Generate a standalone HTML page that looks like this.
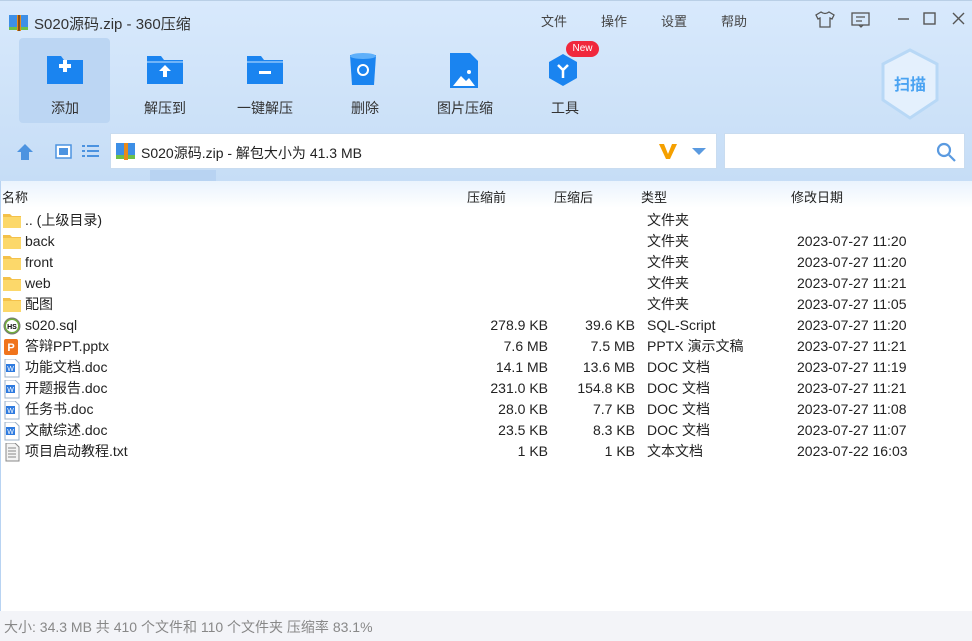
<!DOCTYPE html><html><head><meta charset="utf-8"><style>
*{margin:0;padding:0;box-sizing:border-box}
body{width:972px;height:641px;overflow:hidden;font-family:"Liberation Sans","Noto Sans CJK SC",sans-serif;background:#fff;position:relative;color:#222}
.top{position:absolute;left:0;top:0;width:972px;height:181px;background:linear-gradient(#d8e9fc,#c6ddf6);border-top:1px solid #b9cfe6}
.abs{position:absolute}
.menu{font-size:13px;color:#444;top:11px}
.tb{position:absolute;top:38px;width:90px;height:85px;text-align:center;font-size:14px;color:#333}
.tb .lbl{position:absolute;top:60px;width:100%}
.tb svg{position:absolute;left:25px;top:14px}
.hdr{position:absolute;top:181px;left:0;width:972px;height:27px;background:linear-gradient(#eaf3fd,#fff);font-size:13px}
.hdr span{position:absolute;top:6px}
.row{position:absolute;left:0;width:972px;height:21px;font-size:14px;line-height:21px}
.row .n{position:absolute;left:25px}
.row .a{position:absolute;right:424px}
.row .b{position:absolute;right:337px}
.row .t{position:absolute;left:647px}
.row .d{position:absolute;left:797px}
.row svg{position:absolute;left:3px;top:2px}
.status{position:absolute;top:611px;left:0;width:972px;height:30px;background:#f3f4f8;font-size:14px;color:#888;padding:6px 0 0 4px}
</style></head><body>
<div class="top"></div>
<svg class="abs" style="left:9px;top:13px" width="20" height="18"><rect x="0" y="2" width="19" height="14" fill="#3d8fe6"/><rect x="0" y="14" width="19" height="3" fill="#6cc04a"/><rect x="8" y="2" width="4" height="16" fill="#e88a1a"/><rect x="9" y="2" width="2" height="16" fill="#8a4b12"/></svg>
<div class="abs" style="left:34px;top:13px;font-size:15px;color:#333">S020源码.zip - 360压缩</div>
<div class="abs menu" style="left:541px">文件</div>
<div class="abs menu" style="left:601px">操作</div>
<div class="abs menu" style="left:661px">设置</div>
<div class="abs menu" style="left:721px">帮助</div>
<svg class="abs" style="left:815px;top:11px" width="20" height="17" fill="none" stroke="#555" stroke-width="1.3"><path d="M6 1 L1 4 L3 8 L5 7 V16 H15 V7 L17 8 L19 4 L14 1 Q10 4 6 1Z"/></svg>
<svg class="abs" style="left:851px;top:12px" width="19" height="16" fill="none" stroke="#555" stroke-width="1.3"><rect x="1" y="1" width="17" height="12"/><path d="M5 5H14M5 9H11M8 13L10 15L12 13"/></svg>
<svg class="abs" style="left:896px;top:12px" width="70" height="14" stroke="#555" stroke-width="1.4" fill="none"><path d="M2 7H13"/><rect x="28" y="1" width="11" height="11"/><path d="M57 1L68 12M68 1L57 12"/></svg>
<div class="abs" style="left:19px;top:38px;width:91px;height:85px;background:#bcd6f3;border-radius:4px"></div>
<div class="tb" style="left:20px"><svg width="40" height="34"><path d="M2 4h14l3 4h19v24H2z" fill="#1a84f0"/><rect x="14" y="12" width="12" height="4" fill="#fff"/><rect x="18" y="8" width="4" height="12" fill="#fff"/></svg><div class="lbl">添加</div></div>
<div class="tb" style="left:120px"><svg width="40" height="34"><path d="M2 4h14l3 4h19v24H2z" fill="#1a84f0"/><path d="M2 10h36" stroke="#8cc4fa" stroke-width="1.5"/><path d="M20 13l-6 6h4v6h4v-6h4z" fill="#fff"/></svg><div class="lbl">解压到</div></div>
<div class="tb" style="left:220px"><svg width="40" height="34"><path d="M2 4h14l3 4h19v24H2z" fill="#1a84f0"/><path d="M2 10h36" stroke="#8cc4fa" stroke-width="1.5"/><rect x="14" y="19" width="12" height="3" fill="#fff"/></svg><div class="lbl">一键解压</div></div>
<div class="tb" style="left:320px"><svg width="40" height="38"><path d="M5 3h26l-2 30H7z" fill="#1a84f0"/><ellipse cx="18" cy="4" rx="13" ry="3" fill="#5fb0fa"/><circle cx="18" cy="18" r="5" fill="none" stroke="#fff" stroke-width="2"/></svg><div class="lbl">删除</div></div>
<div class="tb" style="left:420px"><svg width="40" height="38"><path d="M5 1h20l8 8v27H5z" fill="#1a84f0"/><path d="M8 34l8-10 5 5 3-3 6 8z" fill="#fff"/><circle cx="24" cy="20" r="2" fill="#fff"/></svg><div class="lbl">图片压缩</div></div>
<div class="tb" style="left:520px"><svg width="40" height="38"><path d="M18 2l14 8v16l-14 8-14-8V10z" fill="#1a84f0"/><path d="M13 13l5 5 5-5M18 18v8" stroke="#fff" stroke-width="2.5" fill="none"/></svg><div class="lbl">工具</div></div>
<div class="abs" style="left:566px;top:41px;width:33px;height:16px;background:#f0283c;border-radius:8px;color:#fff;font-size:10px;text-align:center;line-height:16px">New</div>
<svg class="abs" style="left:880px;top:48px" width="60" height="74"><path d="M30 2l27 14v36L30 70 3 52V16z" fill="#e4f0fd" stroke="#b8d8f6" stroke-width="3"/><text x="30" y="42" text-anchor="middle" font-size="16" font-weight="bold" fill="#4aa3f2" font-family="Noto Sans CJK SC">扫描</text></svg>
<svg class="abs" style="left:15px;top:143px" width="90" height="18"><path d="M10 1l8 8h-4v8h-8V9H2z" fill="#4c93e0"/><rect x="41" y="2" width="15" height="13" fill="#fff" stroke="#4c93e0" stroke-width="1.5"/><rect x="44" y="5" width="9" height="7" fill="#4c93e0"/><path d="M67 3h3M72 3h12M67 8h3M72 8h12M67 13h3M72 13h12" stroke="#4c93e0" stroke-width="2"/></svg>
<div class="abs" style="left:110px;top:133px;width:607px;height:36px;background:#fff;border:1px solid #c9dcf0"></div>
<svg class="abs" style="left:116px;top:142px" width="20" height="18"><rect x="0" y="1" width="19" height="14" fill="#3d8fe6"/><rect x="0" y="13" width="19" height="4" fill="#6cc04a"/><rect x="8" y="1" width="4" height="17" fill="#e88a1a"/></svg>
<div class="abs" style="left:141px;top:143px;font-size:14px">S020源码.zip - 解包大小为 41.3 MB</div>
<svg class="abs" style="left:658px;top:142px" width="52" height="20"><path d="M1 2l7 15h4l7-15h-5l-4 10-4-10z" fill="#f5a000"/><path d="M34 6h14l-7 7z" fill="#5a9ae0"/></svg>
<div class="abs" style="left:724px;top:133px;width:241px;height:36px;background:#fff;border:1px solid #c9dcf0"></div>
<svg class="abs" style="left:936px;top:142px" width="22" height="20" fill="none" stroke="#5a9ae0" stroke-width="2.2"><circle cx="8" cy="8" r="6"/><path d="M13 13l6 6"/></svg>
<div class="abs" style="left:150px;top:170px;width:66px;height:11px;background:#b8d3f2"></div>
<div class="hdr"><span style="left:2px">名称</span><span style="left:467px">压缩前</span><span style="left:554px">压缩后</span><span style="left:641px">类型</span><span style="left:791px">修改日期</span></div>
<svg width="0" height="0" style="position:absolute"><defs>
<g id="f"><path d="M0 2h7l2 2h9v12H0z" fill="#f4c14a"/><rect x="0" y="5" width="18" height="11" fill="#fcd86a"/></g>
<g id="w"><path d="M2 0h10l4 4v14H2z" fill="#fff" stroke="#9bb0c8"/><rect x="3" y="5" width="9" height="8" fill="#2e7be0"/><text x="7.5" y="12" font-size="7" fill="#fff" text-anchor="middle" font-family="Liberation Sans">W</text></g>
</defs></svg>
<div class="row" style="top:210px"><svg width="20" height="18"><use href="#f"/></svg><span class="n">.. (上级目录)</span><span class="t">文件夹</span></div>
<div class="row" style="top:231px"><svg width="20" height="18"><use href="#f"/></svg><span class="n">back</span><span class="t">文件夹</span><span class="d">2023-07-27 11:20</span></div>
<div class="row" style="top:252px"><svg width="20" height="18"><use href="#f"/></svg><span class="n">front</span><span class="t">文件夹</span><span class="d">2023-07-27 11:20</span></div>
<div class="row" style="top:273px"><svg width="20" height="18"><use href="#f"/></svg><span class="n">web</span><span class="t">文件夹</span><span class="d">2023-07-27 11:21</span></div>
<div class="row" style="top:294px"><svg width="20" height="18"><use href="#f"/></svg><span class="n">配图</span><span class="t">文件夹</span><span class="d">2023-07-27 11:05</span></div>
<div class="row" style="top:315px"><svg width="20" height="18"><circle cx="9" cy="9" r="8" fill="#6fae3a" stroke="#777"/><circle cx="9" cy="9" r="6" fill="#fff"/><text x="9" y="12" font-size="7" font-weight="bold" text-anchor="middle" font-family="Liberation Sans">HS</text></svg><span class="n">s020.sql</span><span class="a">278.9 KB</span><span class="b">39.6 KB</span><span class="t">SQL-Script</span><span class="d">2023-07-27 11:20</span></div>
<div class="row" style="top:336px"><svg width="20" height="18"><rect x="1" y="1" width="14" height="16" rx="2" fill="#f0741c"/><text x="8" y="13" font-size="11" font-weight="bold" fill="#fff" text-anchor="middle" font-family="Liberation Sans">P</text></svg><span class="n">答辩PPT.pptx</span><span class="a">7.6 MB</span><span class="b">7.5 MB</span><span class="t">PPTX 演示文稿</span><span class="d">2023-07-27 11:21</span></div>
<div class="row" style="top:357px"><svg width="20" height="19"><use href="#w"/></svg><span class="n">功能文档.doc</span><span class="a">14.1 MB</span><span class="b">13.6 MB</span><span class="t">DOC 文档</span><span class="d">2023-07-27 11:19</span></div>
<div class="row" style="top:378px"><svg width="20" height="19"><use href="#w"/></svg><span class="n">开题报告.doc</span><span class="a">231.0 KB</span><span class="b">154.8 KB</span><span class="t">DOC 文档</span><span class="d">2023-07-27 11:21</span></div>
<div class="row" style="top:399px"><svg width="20" height="19"><use href="#w"/></svg><span class="n">任务书.doc</span><span class="a">28.0 KB</span><span class="b">7.7 KB</span><span class="t">DOC 文档</span><span class="d">2023-07-27 11:08</span></div>
<div class="row" style="top:420px"><svg width="20" height="19"><use href="#w"/></svg><span class="n">文献综述.doc</span><span class="a">23.5 KB</span><span class="b">8.3 KB</span><span class="t">DOC 文档</span><span class="d">2023-07-27 11:07</span></div>
<div class="row" style="top:441px"><svg width="20" height="19"><path d="M3 0h9l4 4v14H3z" fill="#f4f4f4" stroke="#888"/><path d="M5 5h8M5 8h8M5 11h8M5 14h8" stroke="#888"/></svg><span class="n">项目启动教程.txt</span><span class="a">1 KB</span><span class="b">1 KB</span><span class="t">文本文档</span><span class="d">2023-07-22 16:03</span></div>
<div class="abs" style="left:0;top:181px;width:1px;height:430px;background:#b8d3f2"></div>
<div class="status">大小: 34.3 MB 共 410 个文件和 110 个文件夹 压缩率 83.1%</div>
</body></html>
